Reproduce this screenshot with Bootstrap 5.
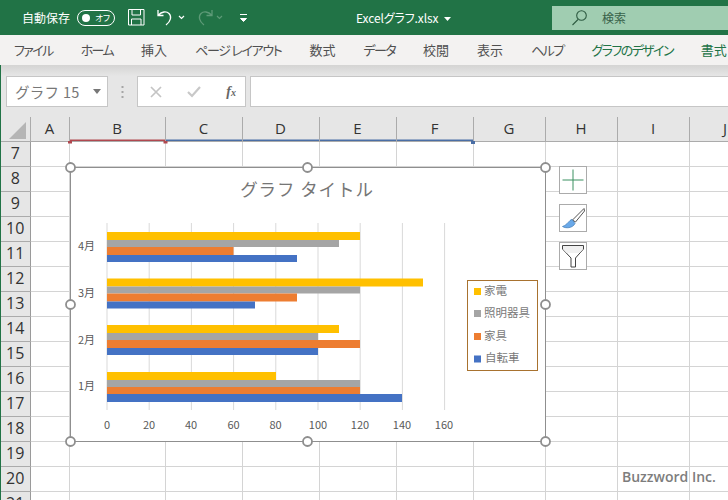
<!DOCTYPE html>
<html lang="ja">
<head>
<meta charset="utf-8">
<title>Excelグラフ.xlsx</title>
<link rel="stylesheet" href="https://cdn.jsdelivr.net/npm/bootstrap@5.3.0/dist/css/bootstrap.min.css">
<style>
html,body{margin:0;height:100%;overflow:hidden;background:#fff}
body{font-family:"Open Sans","Noto Sans CJK JP",sans-serif;color:#444}
.jp{font-family:"Noto Sans CJK JP",sans-serif;font-feature-settings:"palt"}
.app{width:728px;height:500px;overflow:hidden}
.titlebar{height:35px;background:#217346;color:#fff;font-size:12px}
.autosave{margin-left:22px;width:49px;white-space:nowrap;font-feature-settings:normal}
.pill{width:38px;height:16px;margin-left:6px;border:1.3px solid #fff;border-radius:8px;padding:0 4px 0 4px;font-size:8.5px}
.knob{width:8px;height:8px;border-radius:50%;background:#fff}
.qat{margin-left:13px}
.undo-ic{margin-left:12px}
.redo-ic{margin-left:4px}
.more-ic{margin-left:6px}
.doc-name{margin-left:107px;white-space:nowrap;font-size:12px;letter-spacing:-.12px}
.doc-caret{margin-left:3px}
.searchbox{margin-left:auto;margin-top:1px;width:176px;height:24px;background:#a0cdb1;color:#38624a;font-size:12px;padding-left:20px;gap:15px;font-feature-settings:normal}
.tabs{height:30px;background:#f3f2f1;padding-left:14px;font-size:13px;color:#505050;gap:28px;white-space:nowrap}
.kn{letter-spacing:-1.6px}
.kl{letter-spacing:-1.3px}
.tab-green{color:#217346}
.workarea{border-left:1px solid #217346;height:435px}
.shadowband{height:52px;background:linear-gradient(#d4d4d3,#e6e6e6 11px);padding:11px 0 0 5px}
.fbox{height:31px;background:#fff;border:1px solid #c6c6c6;flex:none}
.namebox{width:102px;font-size:14.5px;color:#777;padding-left:8px;padding-right:6px;letter-spacing:.3px;font-feature-settings:normal}
.dots{width:30px;height:31px}
.fxbox{width:109px;padding:0 9px 0 12px}
.fxmark{font:italic 700 14px "Liberation Serif",serif;color:#666}
.fxmark span{font-size:10px}
.inputbox{width:478px;margin-left:4px;border-right:0}
.sheetwrap{height:383px;overflow:hidden}
.sheet{table-layout:fixed;width:760px;border-collapse:collapse;margin:0;font-size:15px;color:#333}
.sheet th{background:#e6e6e6;font-weight:400;text-align:center;padding:0;line-height:1}
.sheet thead th{height:24px;border-right:1px solid #ababab;border-bottom:1px solid #ababab;vertical-align:middle}
.sheet thead th.selred{box-shadow:inset 0 -1.500px 0 #b0484f}
.sheet thead th.selblue{box-shadow:inset 0 -1.500px 0 #4a6ea5}
.sheet tbody th{border-right:1px solid #9a9a9a;border-bottom:1px solid #ababab;font-size:16px;padding-bottom:1px}
.sheet td{height:25px;padding:0;border-right:1px solid #d4d4d4;border-bottom:1px solid #d4d4d4;background:#fff}
.corner{margin:3px 0 0 8px}
.canvas{position:absolute;left:-1px;top:0;width:728px;height:383px;pointer-events:none}
.canvas text{font-family:"Noto Sans CJK JP",sans-serif}
.floatbtns{position:absolute;left:558px;top:49px;gap:10px}
.chartbtn{width:28px;height:28px;background:#fff;border:1px solid #ababab;padding:0}
.wm{position:absolute;left:621px;top:349px;font-size:14px;font-weight:600;color:#7d7d7d;white-space:nowrap;line-height:22px}
</style>
</head>
<body>
<div class="app">
  <div class="titlebar d-flex align-items-center">
    <span class="autosave jp">自動保存</span>
    <span class="pill d-flex align-items-center justify-content-between jp"><span class="knob"></span><span>オフ</span></span>
    <svg class="qat" width="17" height="17" viewBox="0 0 17 17" fill="none" stroke="#fff" stroke-width="1"><path d="M.5.5h15.500v15.500h-15.500zM4 .5v5.500h8.500v-5.500M3.500 16v-6h9.500v6"/></svg>
    <svg class="undo-ic" width="36" height="18" viewBox="0 0 36 18" fill="none" stroke="#fff" stroke-width="1.300"><path d="M1 1v5.500h5.500M1.500 6c3-3.500 8-4 10.500-1.500 2.800 2.800 2 7.500-3 11.500"/><path d="M22 7l2.500 2.500L27 7" stroke-width="1.200"/></svg>
    <svg class="redo-ic" width="36" height="18" viewBox="0 0 36 18" fill="none" stroke="#5d9a77" stroke-width="1.300"><path d="M15 1v5.500h-5.500M14.500 6c-3-3.500-8-4-10.500-1.500-2.800 2.800-2 7.500 3 11.500"/><path d="M20 7l2.500 2.500L25 7" stroke-width="1.200"/></svg>
    <svg class="more-ic" width="10" height="12" viewBox="0 0 10 12" fill="none" stroke="#fff"><path d="M1 2.500h7"/><path d="M1.500 6.500h6l-3 3z" fill="#fff"/></svg>
    <span class="doc-name jp">Excelグラフ.xlsx&nbsp;<svg class="doc-caret" width="7" height="4" viewBox="0 0 7 4"><path d="M0 0h7L3.500 4z" fill="#fff"/></svg></span>
    <div class="searchbox d-flex align-items-center jp">
      <svg width="15" height="16" viewBox="0 0 15 16" fill="none" stroke="#2d5a41" stroke-width="1.100"><circle cx="9.500" cy="5.500" r="4.800"/><path d="M6 9.500L.5 15"/></svg>
      <span>検索</span>
    </div>
  </div>
  <nav class="tabs d-flex align-items-center jp">
    <span class="kn">ファイル</span><span class="kn">ホーム</span><span>挿入</span><span class="kl">ページ レイアウト</span><span>数式</span><span class="kn">データ</span><span>校閲</span><span>表示</span><span class="kn">ヘルプ</span><span class="kn tab-green">グラフのデザイン</span><span class="tab-green">書式</span>
  </nav>
  <div class="workarea">
    <div class="shadowband d-flex align-items-start">
      <div class="fbox namebox d-flex align-items-center justify-content-between jp"><span>グラフ 15</span><svg width="8" height="5" viewBox="0 0 8 5"><path d="M0 0h8L4 5z" fill="#777"/></svg></div>
      <div class="dots d-flex align-items-center justify-content-center"><svg width="3" height="12" viewBox="0 0 3 12" fill="#a5a5a5"><rect width="2" height="2" x=".5"/><rect width="2" height="2" x=".5" y="5"/><rect width="2" height="2" x=".5" y="10"/></svg></div>
      <div class="fbox fxbox d-flex align-items-center justify-content-between">
        <svg width="12" height="12" viewBox="0 0 12 12" stroke="#c4c4c4" stroke-width="1.700"><path d="M1 1l10 10M11 1L1 11"/></svg>
        <svg width="14" height="12" viewBox="0 0 14 12" fill="none" stroke="#c8c8c8" stroke-width="2.200"><path d="M1 6l4 4 8-9"/></svg>
        <span class="fxmark">f<span>x</span></span>
      </div>
      <div class="fbox inputbox"></div>
    </div>
    <div class="sheetwrap position-relative">
      <table class="sheet">
        <colgroup><col style="width:29px"><col style="width:39px"><col style="width:96px"><col style="width:77px"><col style="width:77px"><col style="width:77px"><col style="width:77px"><col style="width:72px"><col style="width:72px"><col style="width:72px"><col style="width:72px"></colgroup>
        <thead><tr>
          <th><svg class="d-block corner" width="18" height="17" viewBox="0 0 18 17"><path d="M17 0v17H0z" fill="#b5b5b5"/></svg></th>
          <th>A</th><th class="selred">B</th><th class="selblue">C</th><th class="selblue">D</th><th class="selblue">E</th><th class="selblue">F</th><th>G</th><th>H</th><th>I</th><th>J</th>
        </tr></thead>
        <tbody>
          <tr><th>7</th><td></td><td></td><td></td><td></td><td></td><td></td><td></td><td></td><td></td><td></td></tr>
          <tr><th>8</th><td></td><td></td><td></td><td></td><td></td><td></td><td></td><td></td><td></td><td></td></tr>
          <tr><th>9</th><td></td><td></td><td></td><td></td><td></td><td></td><td></td><td></td><td></td><td></td></tr>
          <tr><th>10</th><td></td><td></td><td></td><td></td><td></td><td></td><td></td><td></td><td></td><td></td></tr>
          <tr><th>11</th><td></td><td></td><td></td><td></td><td></td><td></td><td></td><td></td><td></td><td></td></tr>
          <tr><th>12</th><td></td><td></td><td></td><td></td><td></td><td></td><td></td><td></td><td></td><td></td></tr>
          <tr><th>13</th><td></td><td></td><td></td><td></td><td></td><td></td><td></td><td></td><td></td><td></td></tr>
          <tr><th>14</th><td></td><td></td><td></td><td></td><td></td><td></td><td></td><td></td><td></td><td></td></tr>
          <tr><th>15</th><td></td><td></td><td></td><td></td><td></td><td></td><td></td><td></td><td></td><td></td></tr>
          <tr><th>16</th><td></td><td></td><td></td><td></td><td></td><td></td><td></td><td></td><td></td><td></td></tr>
          <tr><th>17</th><td></td><td></td><td></td><td></td><td></td><td></td><td></td><td></td><td></td><td></td></tr>
          <tr><th>18</th><td></td><td></td><td></td><td></td><td></td><td></td><td></td><td></td><td></td><td></td></tr>
          <tr><th>19</th><td></td><td></td><td></td><td></td><td></td><td></td><td></td><td></td><td></td><td></td></tr>
          <tr><th>20</th><td></td><td></td><td></td><td></td><td></td><td></td><td></td><td></td><td></td><td></td></tr>
          <tr><th>21</th><td></td><td></td><td></td><td></td><td></td><td></td><td></td><td></td><td></td><td></td></tr>
        </tbody>
      </table>
      <svg class="canvas" viewBox="0 117 728 383">
        <rect x="68" y="141" width="4" height="2.500" fill="#b0484f"/><rect x="163.500" y="141" width="4" height="2.500" fill="#b0484f"/><rect x="471" y="141" width="4" height="3" fill="#4a6ea5"/>
        <rect x="70.500" y="167.500" width="475" height="274" fill="#fff" stroke="#8f8f8f" stroke-width="1"/>
        <text x="307" y="196" text-anchor="middle" font-size="17.500" fill="#767676" letter-spacing=".9">グラフ タイトル</text>
        <g stroke="#d9d9d9" stroke-width="1">
          <path d="M107 223V410M149.200 223V410M191.400 223V410M233.600 223V410M275.800 223V410M318 223V410M360.200 223V410M402.400 223V410M444.600 223V410"/>
        </g>
        <g fill="#ffc000"><rect x="107" y="232" width="253" height="8"/><rect x="107" y="278.500" width="316" height="8"/><rect x="107" y="325" width="232" height="8"/><rect x="107" y="372" width="169" height="8"/></g>
        <g fill="#a5a5a5"><rect x="107" y="240" width="232" height="7"/><rect x="107" y="286.500" width="253" height="7"/><rect x="107" y="333" width="211" height="7"/><rect x="107" y="380" width="253" height="7"/></g>
        <g fill="#ed7d31"><rect x="107" y="247" width="126.500" height="8"/><rect x="107" y="293.500" width="190" height="8"/><rect x="107" y="340" width="253" height="8"/><rect x="107" y="387" width="253" height="7"/></g>
        <g fill="#4472c4"><rect x="107" y="255" width="190" height="7"/><rect x="107" y="301.500" width="148" height="7"/><rect x="107" y="348" width="211" height="7"/><rect x="107" y="394" width="295" height="8"/></g>
        <g font-size="11" fill="#595959" text-anchor="end">
          <text x="95" y="250">4月</text><text x="95" y="297">3月</text><text x="95" y="344">2月</text><text x="95" y="390">1月</text>
        </g>
        <g font-size="11" fill="#595959" text-anchor="middle">
          <text x="107" y="429">0</text><text x="149" y="429">20</text><text x="191" y="429">40</text><text x="233.500" y="429">60</text><text x="275.500" y="429">80</text><text x="318" y="429">100</text><text x="360" y="429">120</text><text x="402" y="429">140</text><text x="444" y="429">160</text>
        </g>
        <rect x="467.500" y="280.500" width="70" height="90" fill="#fff" stroke="#a8722f"/>
        <rect x="474" y="288" width="7" height="7" fill="#ffc000"/><rect x="474" y="310" width="7" height="7" fill="#a5a5a5"/><rect x="474" y="333" width="7" height="7" fill="#ed7d31"/><rect x="474" y="355.500" width="7" height="7" fill="#4472c4"/>
        <g font-size="11.500" fill="#7a7a7a">
          <text x="484" y="295">家電</text><text x="484" y="317">照明器具</text><text x="484" y="340">家具</text><text x="485" y="362">自転車</text>
        </g>
        <g fill="#fff" stroke="#8e8e8e" stroke-width="1.800">
          <circle cx="70.500" cy="167.500" r="4.500"/><circle cx="307.500" cy="167.500" r="4.500"/><circle cx="545.500" cy="167.500" r="4.500"/><circle cx="70.500" cy="304.500" r="4.500"/><circle cx="545.500" cy="304.500" r="4.500"/><circle cx="70.500" cy="441.500" r="4.500"/><circle cx="307.500" cy="441.500" r="4.500"/><circle cx="545.500" cy="441.500" r="4.500"/>
        </g>
      </svg>
      <div class="floatbtns d-flex flex-column">
        <button type="button" class="chartbtn d-block" aria-label="グラフ要素"><svg class="d-block" width="26" height="26" viewBox="0 0 26 26" stroke="#3a9060"><path d="M13 2.500v21M2.500 13h21"/></svg></button>
        <button type="button" class="chartbtn d-block" aria-label="グラフ スタイル"><svg class="d-block" width="26" height="26" viewBox="0 0 26 26"><path d="M12.500 15L24 3.500l.5 2.500-9 11z" fill="#fff" stroke="#555"/><path d="M12 14.500c-3 .5-4 5-9.500 7 3 2 10 2 12.500-3z" fill="#6aa9e9" stroke="#3c78b4" stroke-width=".7"/></svg></button>
        <button type="button" class="chartbtn d-block" aria-label="グラフ フィルター"><svg class="d-block" width="26" height="26" viewBox="0 0 26 26"><path d="M2.500 2.500h21V6L15.500 15v9h-4.500V15L2.500 6z" fill="#fff" stroke="#444"/><path d="M3 3h20v3l-3.500 4H6.500L3 6z" fill="#f0f0f0"/></svg></button>
      </div>
      <div class="wm">Buzzword Inc.</div>
    </div>
  </div>
</div>
<script src="https://cdn.jsdelivr.net/npm/bootstrap@5.3.0/dist/js/bootstrap.bundle.min.js"></script>
</body>
</html>
